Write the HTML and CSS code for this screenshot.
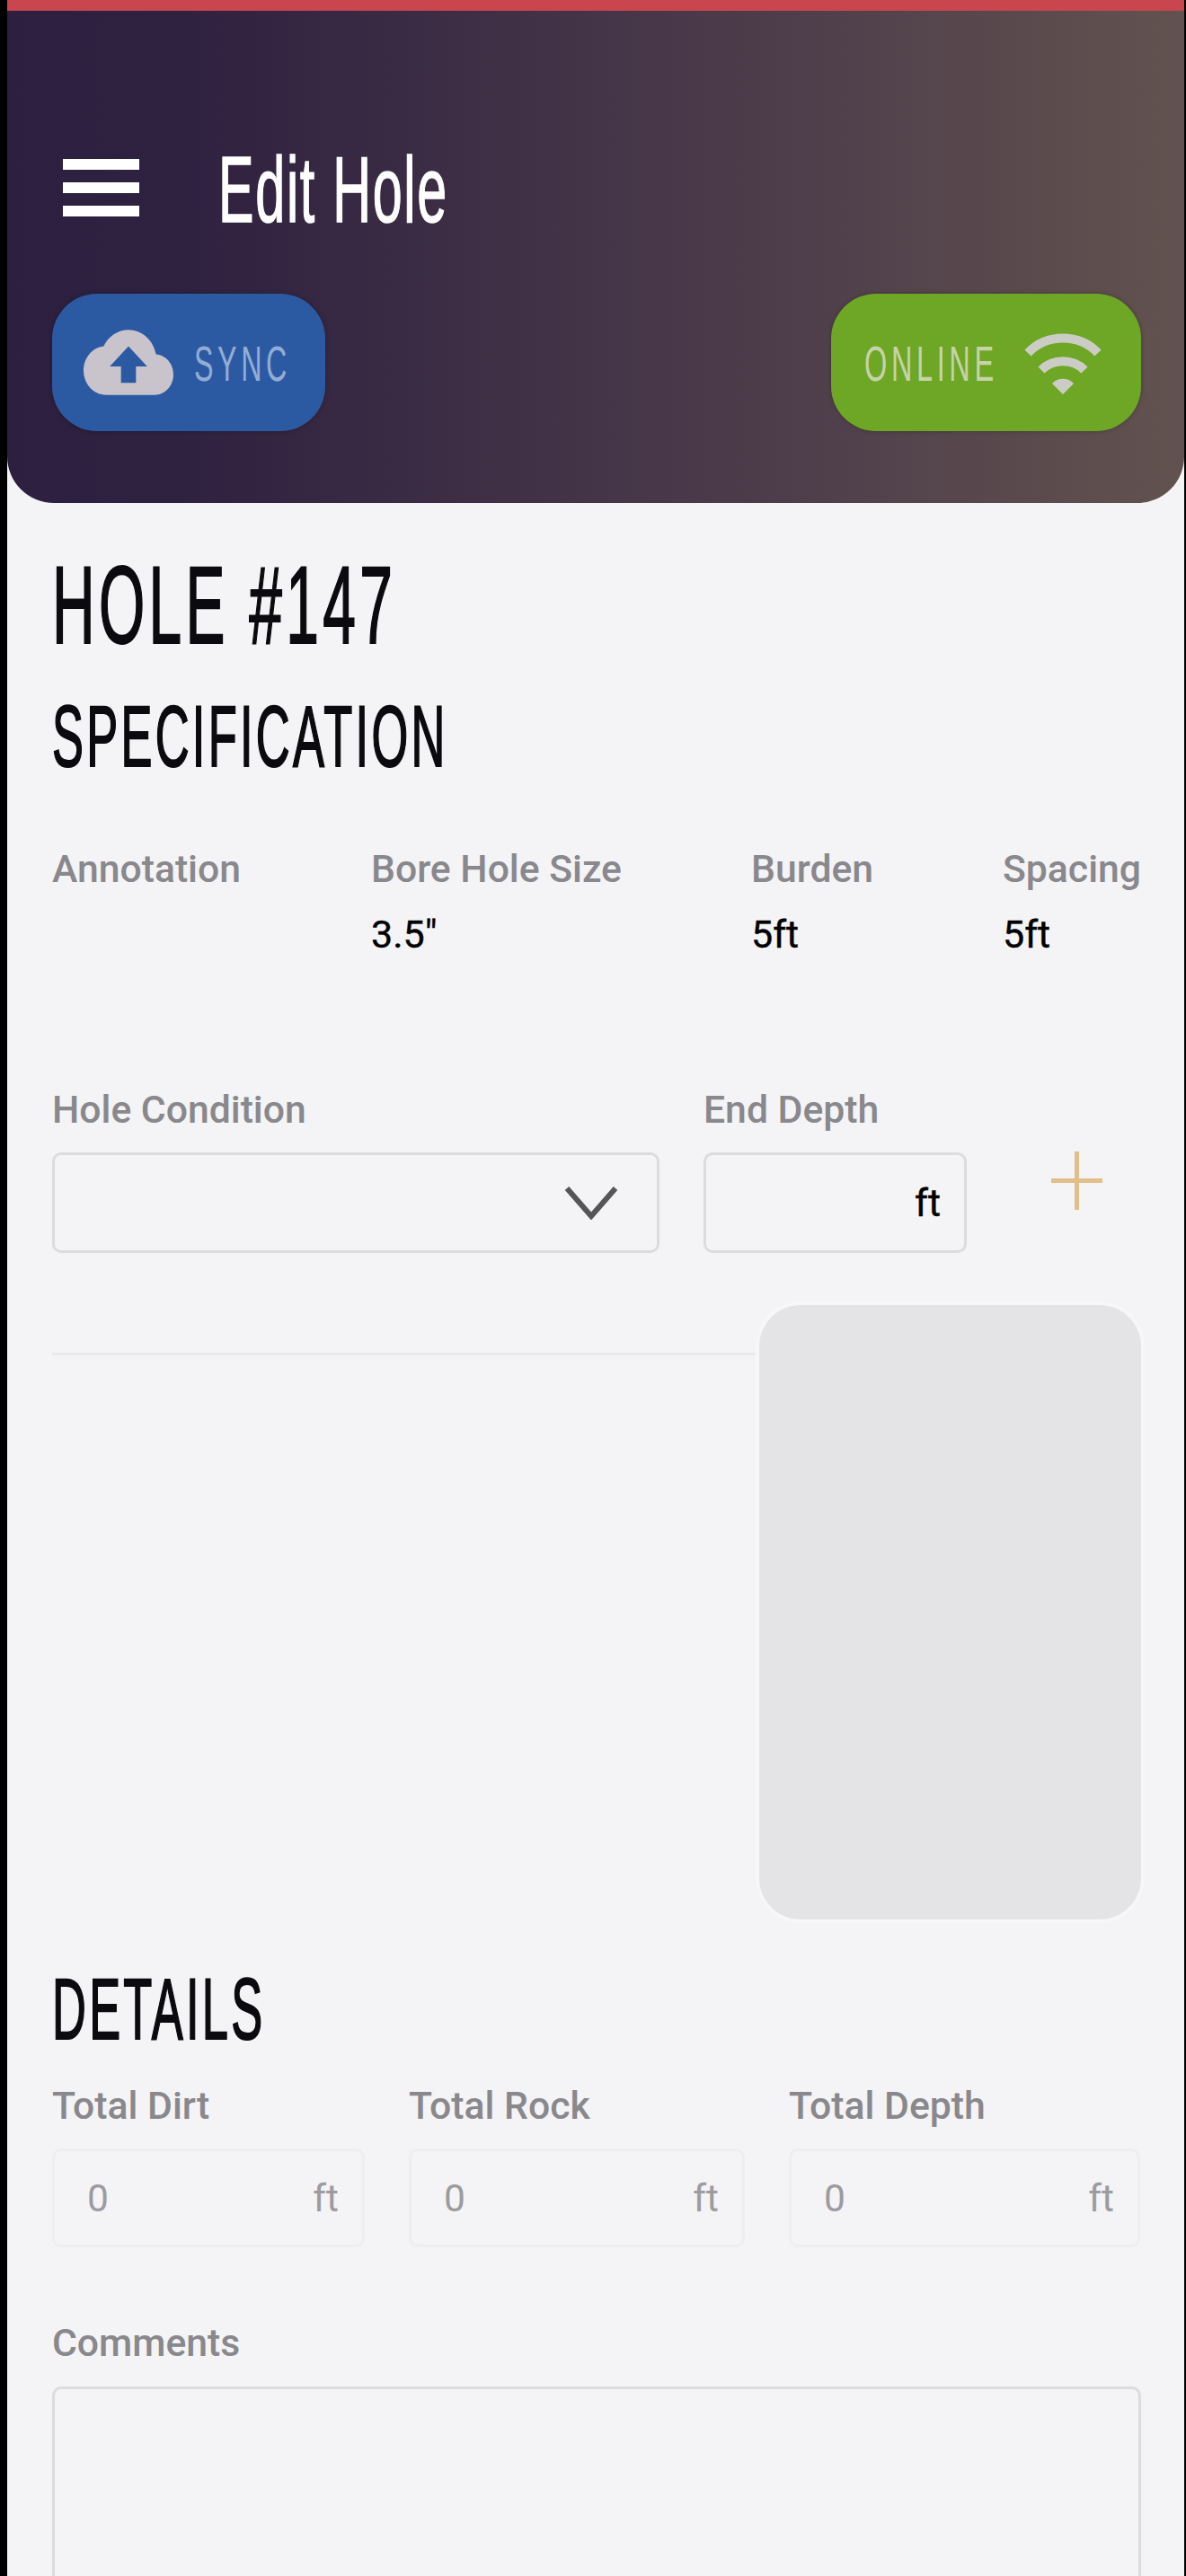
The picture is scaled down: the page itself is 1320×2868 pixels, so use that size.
FILE: index.html
```html
<!DOCTYPE html>
<html lang="en">
<head>
<meta charset="utf-8">
<title>Edit Hole</title>
<link rel="stylesheet" href="styles.css">
</head>
<body>
<div class="frame">
  <div class="app">
  <header class="header">
    <div class="title-row">
      <svg class="menu" viewBox="0 0 85 64" aria-hidden="true"><rect y="0" width="85" height="12"/><rect y="26" width="85" height="12"/><rect y="52" width="85" height="12"/></svg>
      <h1 class="title cond">Edit Hole</h1>
    </div>
    <div class="pills">
      <div class="pill pill-sync">
        <svg class="cloud" viewBox="0 3.5 24 17" preserveAspectRatio="none" aria-hidden="true"><path fill-rule="evenodd" d="M19.35 10.04C18.67 6.59 15.64 4 12 4 9.11 4 6.6 5.64 5.35 8.04 2.34 8.36 0 10.91 0 14c0 3.31 2.69 6 6 6h13c2.76 0 5-2.24 5-5 0-2.64-2.05-4.78-4.65-4.96zM14 13v4h-4v-4H7l5-5 5 5h-3z"/></svg>
        <span class="pill-text sync-text cond">SYNC</span>
      </div>
      <div class="pill pill-online">
        <span class="pill-text online-text cond">ONLINE</span>
        <svg class="wifi" viewBox="0 0 86 70" aria-hidden="true"><path class="arc" d="M4 24C25 2 61 2 82 24"/><path class="arc" d="M19 43C32 30 54 30 67 43"/><path class="dot" d="M43 70L31 58C37 51 49 51 55 58Z"/></svg>
      </div>
    </div>
  </header>
  <main class="main">
    <h2 class="hole cond">HOLE #147</h2>
    <h3 class="section spec-title cond">SPECIFICATION</h3>
    <div class="spec-grid">
      <div><div class="label">Annotation</div><div class="value"></div></div>
      <div><div class="label">Bore Hole Size</div><div class="value">3.5"</div></div>
      <div><div class="label">Burden</div><div class="value">5ft</div></div>
      <div><div class="label">Spacing</div><div class="value">5ft</div></div>
    </div>
    <div class="form-row">
      <div class="field-select">
        <div class="label">Hole Condition</div>
        <div class="box select">
          <svg class="chevron" viewBox="0 0 60 38" aria-hidden="true"><path d="M3 3L30 34L57 3"/></svg>
        </div>
      </div>
      <div class="field-depth">
        <div class="label">End Depth</div>
        <div class="box depth"><span class="unit-dark">ft</span></div>
      </div>
      <svg class="plus" viewBox="0 0 57 65" aria-hidden="true"><path d="M28.500 0V65M0 32.500H57"/></svg>
    </div>
    <div class="media-row">
      <div class="divider"></div>
      <div class="media"></div>
    </div>
    <h3 class="section details-title cond">DETAILS</h3>
    <div class="details-grid">
      <div><div class="label">Total Dirt</div><div class="box readonly"><span>0</span><span>ft</span></div></div>
      <div><div class="label">Total Rock</div><div class="box readonly"><span>0</span><span>ft</span></div></div>
      <div><div class="label">Total Depth</div><div class="box readonly"><span>0</span><span>ft</span></div></div>
    </div>
    <div class="label comments-label">Comments</div>
    <div class="box comments"></div>
  </main>
  </div>
</div>
</body>
</html>
```
FILE: styles.css
```css
* { box-sizing: border-box; }
html, body { margin: 0; padding: 0; background: #000; }
.frame {
  width: 1320px;
  height: 2868px;
  overflow: hidden;
  padding: 0 2px 0 8px;
  background: #000;
  font-family: Roboto, "Liberation Sans", sans-serif;
}
.app {
  height: 100%;
  background: #f4f3f6;
  display: flex;
  flex-direction: column;
}
.cond {
  font-family: "Liberation Sans", sans-serif;
  font-weight: 400;
  transform-origin: left center;
  white-space: nowrap;
  margin: 0;
}
.header {
  flex: none;
  height: 560px;
  border-top: 12px solid #c9464e;
  background: linear-gradient(90deg, #2d1f3f 0%, #2f2140 15%, #4a3a4a 60%, #62524f 100%);
  border-radius: 0 0 52px 52px;
  padding: 157px 48px 0 50px;
}
.title-row { display: flex; align-items: center; height: 80px; padding-left: 12px; }
.menu { width: 85px; height: 64px; fill: #fff; flex: none; }
.title {
  color: #fff;
  font-size: 103px;
  line-height: 80px;
  letter-spacing: 3px;
  margin: 6px 0 0 88px;
  transform: scaleX(0.575);
  -webkit-text-stroke: 1.5px #fff;
}
.pills { display: flex; justify-content: space-between; margin-top: 78px; }
.pill {
  height: 153px;
  border-radius: 50px;
  display: flex;
  align-items: center;
  box-shadow: 0 0 5px rgba(0, 0, 0, .25);
}
.pill-sync { width: 304px; background: #2c5aa2; padding-left: 35px; }
.pill-online { width: 345px; background: #6ea626; padding-left: 37px; }
.cloud { width: 100px; height: 77px; fill: #c9c4cc; flex: none; }
.pill-text { font-size: 56px; line-height: 60px; letter-spacing: 8px; padding-top: 2px; }
.sync-text { color: #93acd6; margin-left: 23px; transform: scaleX(0.575); }
.online-text { color: #c5d3a8; transform: scaleX(0.58); width: 178px; }
.wifi { width: 86px; height: 70px; flex: none; }
.wifi .arc { fill: none; stroke: #cbcdc4; stroke-width: 10; }
.wifi .dot { fill: #cbcdc4; }
.main {
  flex: 1;
  padding: 0 48px 0 50px;
  min-height: 0;
}
.hole {
  color: #0b0b0f;
  font-size: 122px;
  line-height: 100px;
  letter-spacing: 8px;
  margin-top: 64px;
  transform: scaleX(0.54);
  -webkit-text-stroke: 2px #0b0b0f;
}
.section {
  color: #0b0b0f;
  font-size: 96px;
  line-height: 80px;
  letter-spacing: 6px;
  transform: scaleX(0.546);
  -webkit-text-stroke: 2px #0b0b0f;
}
.spec-title { margin-top: 56px; }
.label {
  color: #89888c;
  font-size: 42.7px;
  font-weight: 500;
  line-height: 48px;
  white-space: nowrap;
}
.value { color: #000; font-size: 43px; line-height: 50px; height: 50px; margin-top: 24px; -webkit-text-stroke: 0.4px #000; }
.spec-grid {
  display: grid;
  grid-template-columns: 355px 423px 280px 1fr;
  margin-top: 83px;
}
.form-row { display: flex; align-items: flex-start; margin-top: 146px; }
.field-select { width: 676px; }
.field-depth { width: 293px; margin-left: 49px; }
.box {
  border: 3px solid #dcdbde;
  border-radius: 10px;
  margin-top: 24px;
}
.select, .depth { height: 112px; display: flex; align-items: center; justify-content: flex-end; }
.select { padding-right: 43px; }
.depth { padding-right: 26px; }
.chevron { width: 60px; height: 38px; fill: none; stroke: #565558; stroke-width: 6; }
.unit-dark { color: #000; font-size: 43px; -webkit-text-stroke: 0.4px #000; }
.plus { width: 57px; height: 65px; margin: 71px 0 0 94px; fill: none; stroke: #e1bf8a; stroke-width: 5; flex: none; }
.media-row { display: flex; align-items: flex-start; margin-top: 58px; }
.divider { flex: 1; height: 3px; margin-top: 53px; background: #e9e8ea; }
.media { width: 425px; height: 684px; background: #e4e3e5; border-radius: 46px; box-shadow: 0 0 0 4px #f7f6f9; }
.details-title { margin-top: 60px; }
.details-grid {
  display: grid;
  grid-template-columns: 348px 374px 391px;
  column-gap: 49px;
  margin-top: 43px;
}
.readonly {
  height: 110px;
  border-color: #eeedf0;
  display: flex;
  align-items: center;
  justify-content: space-between;
  padding: 0 26px 0 36px;
  color: #9c9b9f;
  font-size: 42.5px;
}
.comments-label { margin-top: 82px; }
.comments { height: 400px; margin-top: 25px; }
```
